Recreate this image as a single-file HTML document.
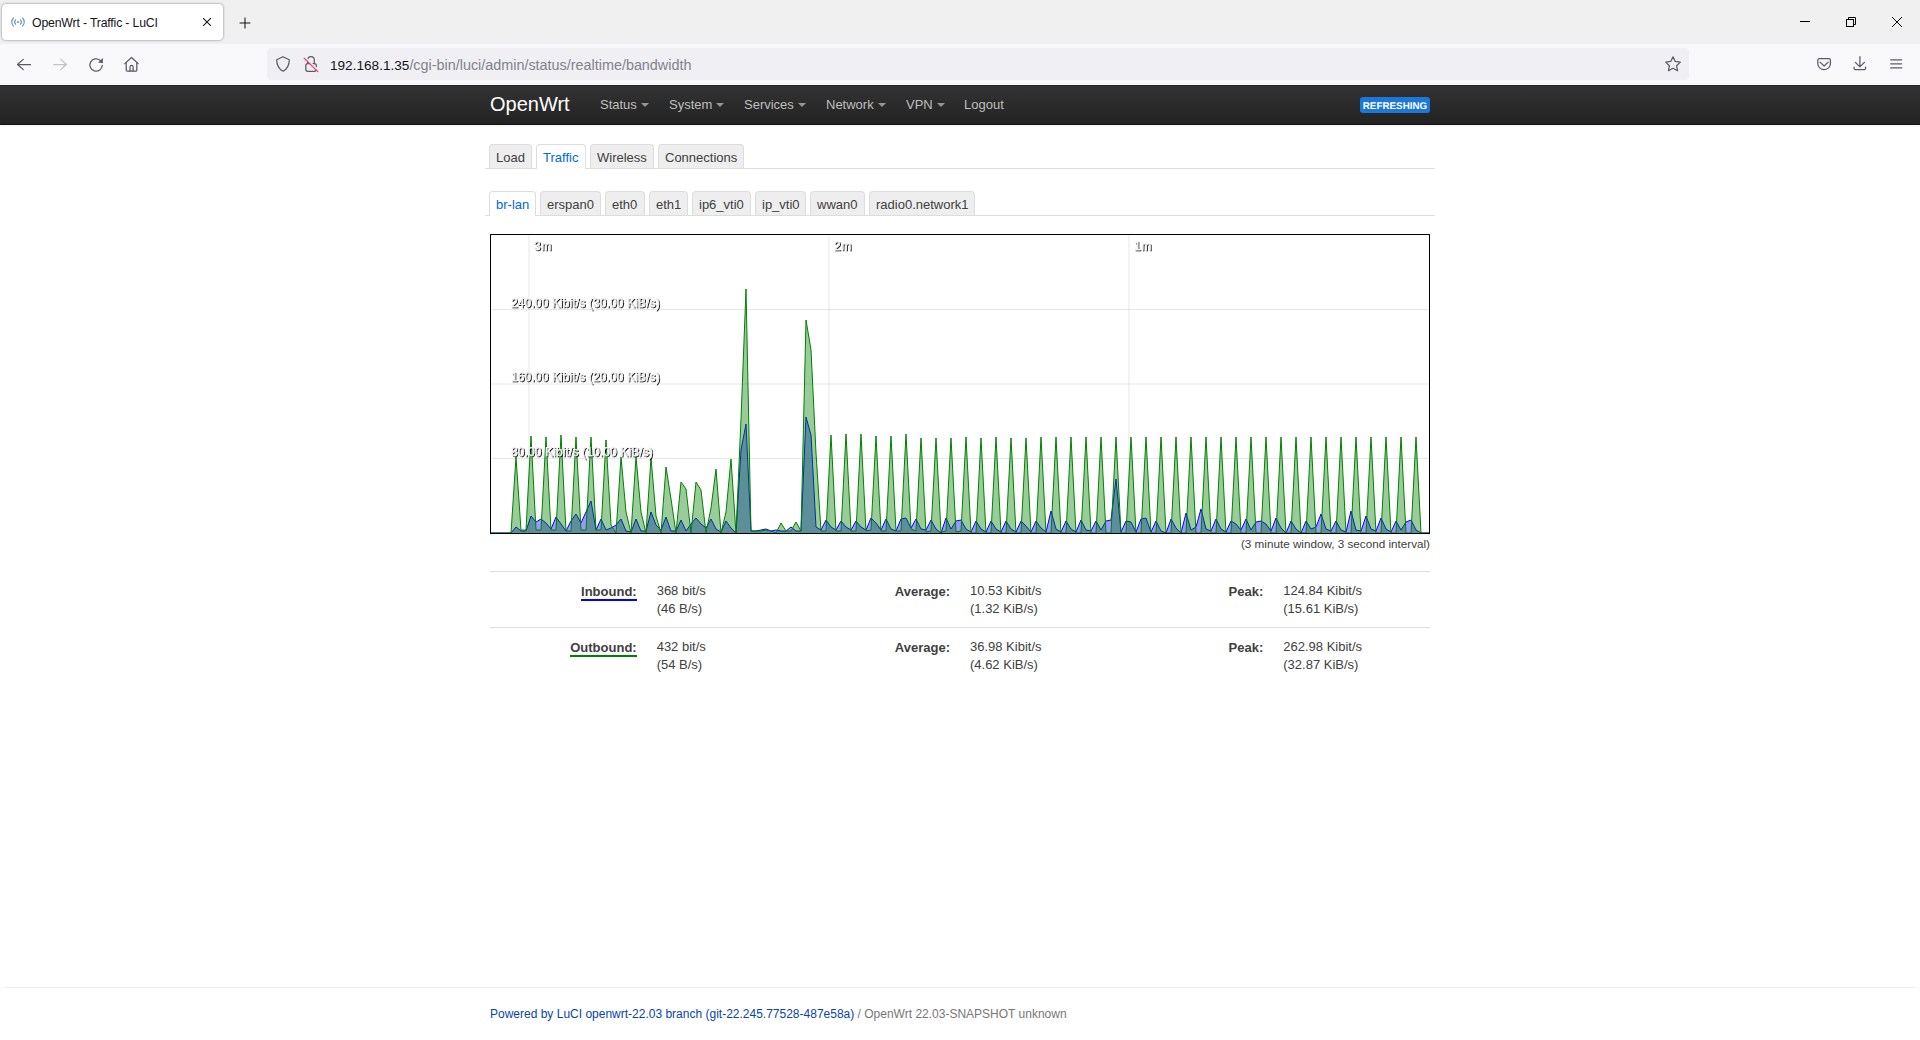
<!DOCTYPE html>
<html lang="en">
<head>
<meta charset="utf-8">
<title>OpenWrt - Traffic - LuCI</title>
<style>
*{box-sizing:border-box;margin:0;padding:0}
html,body{width:1920px;height:1040px;overflow:hidden;background:#fff}
body{font-family:"Liberation Sans",sans-serif;font-size:13px;line-height:18px;color:#404040;position:relative}
.abs{position:absolute}
/* ---------- browser chrome ---------- */
#tabbar{left:0;top:0;width:1920px;height:44px;background:#f0f0f0}
#tab{left:2px;top:4px;width:221px;height:36px;background:#fff;border-radius:4px;box-shadow:0 0 2.5px rgba(0,0,0,.5)}
#tabtitle{left:32px;top:14px;font-size:12.3px;line-height:18px;color:#15141a;white-space:nowrap;letter-spacing:-0.18px}
#navbar{left:0;top:44px;width:1920px;height:41px;background:#f9f9fb}
#urlbar{left:267px;top:48px;width:1422px;height:32px;background:#f0f0f4;border-radius:4px}
#url{left:330px;top:55px;font-size:13.6px;line-height:20px;color:#15141a;white-space:nowrap}
#url span{color:#82828c;font-size:14.38px}
svg.ic{position:absolute;overflow:visible}
/* ---------- page ---------- */
#hdr{left:0;top:85px;width:1920px;height:40px;background:linear-gradient(#333,#222);box-shadow:0 1px 2px rgba(0,0,0,.06),inset 0 1px 0 rgba(0,0,0,.22),inset 0 -1px 0 rgba(0,0,0,.45)}
#brand{left:490px;top:93px;font-size:20px;line-height:22px;color:#fff;white-space:nowrap}
.nav{top:95px;font-size:13px;line-height:19px;color:#bfbfbf;white-space:nowrap}
.nav i{display:inline-block;width:0;height:0;vertical-align:top;margin-top:8px;margin-left:4px;border-left:4px solid transparent;border-right:4px solid transparent;border-top:4px solid #fff;opacity:.5}
#badge{left:1360px;top:97px;width:70px;height:16px;background:#1c78d8;border-radius:3px;color:#fff;font-size:9.75px;font-weight:bold;line-height:17.5px;text-align:center;white-space:nowrap;letter-spacing:0.05px;padding-left:0}
#badge span{display:inline;text-rendering:geometricPrecision}
.tabline{left:485px;width:950px;height:1px;background:#ddd}
.tb{height:24px;border:1px solid #ddd;border-bottom:none;border-radius:4px 4px 0 0;background:#eee;color:#404040;font-size:13px;line-height:23px;padding:1px 6px 0;white-space:nowrap}
.tb.act{background:#fff;color:#0069d6;height:25px}
#chart{left:490px;top:234px;width:940px;height:300px;border:1px solid #000;background:#fff;overflow:hidden}
.lb{fill:#eee;stroke:#eee;stroke-width:0.25px;font-size:12px;font-family:"Liberation Sans",sans-serif;letter-spacing:0.12px}
#cap{left:1030px;top:535px;width:400px;text-align:right;font-size:11.7px;line-height:18px;color:#404040;white-space:nowrap}
.hr{left:490px;width:940px;height:1px;background:#ddd}
.c{font-size:13px;line-height:18px;color:#404040;white-space:nowrap}
.c b{font-weight:bold}
.r{text-align:right}
#tbl{left:490px;top:571px;width:940px;table-layout:fixed;border-collapse:separate;border-spacing:0}
#tbl td{width:16.6667%;padding:10px 10px 9px;border-top:1px solid #ddd;vertical-align:top;font-size:13px;line-height:18px;color:#404040;white-space:nowrap}
#tbl td.r{text-align:right}
#tbl td b{position:relative;top:1px}
#foot{left:490px;top:1005px;font-size:12px;line-height:18px;color:#777;white-space:nowrap}
#foot a{color:#0a44a8;text-decoration:none}
</style>
</head>
<body>
<!-- browser chrome -->
<div class="abs" id="tabbar"></div>
<div class="abs" id="tab"></div>
<svg class="ic" style="left:10px;top:14px" width="16" height="16" viewBox="0 0 16 16" fill="none" stroke="#6f9bb3" stroke-width="1.2" stroke-linecap="round"><circle cx="8" cy="8" r="1.1" fill="#6f9bb3" stroke="none"/><path d="M5.6 5.8a3.2 3.2 0 0 0 0 4.4M10.4 5.8a3.2 3.2 0 0 1 0 4.4M3.4 4a5.8 5.8 0 0 0 0 8M12.6 4a5.8 5.8 0 0 1 0 8"/></svg>
<div class="abs" id="tabtitle">OpenWrt - Traffic - LuCI</div>
<svg class="ic" style="left:202.200px;top:17.200px" width="10" height="10" viewBox="0 0 10 10" fill="none" stroke="#15141a" stroke-width="1.050"><path d="M1.100 1.100l7.800 7.800M8.900 1.100l-7.800 7.800"/></svg>
<svg class="ic" style="left:238.500px;top:17px" width="12" height="12" viewBox="0 0 12 12" fill="none" stroke="#15141a" stroke-width="1.050"><path d="M6 0.600v10.800M0.600 6h10.800"/></svg>
<!-- window controls -->
<svg class="ic" style="left:1800px;top:21px" width="10" height="1" viewBox="0 0 10 1"><rect width="10" height="1" fill="#000"/></svg>
<svg class="ic" style="left:1846px;top:17px" width="10" height="10" viewBox="0 0 10 10" fill="none" stroke="#000" stroke-width="1"><rect x="0.5" y="2.5" width="7" height="7"/><path d="M2.5 2.500v-2h7v7h-2"/></svg>
<svg class="ic" style="left:1892px;top:17px" width="10" height="10" viewBox="0 0 10 10" fill="none" stroke="#000" stroke-width="1"><path d="M0 0l10 10M10 0l-10 10"/></svg>
<!-- nav toolbar -->
<div class="abs" id="navbar"></div>
<svg class="ic" style="left:16px;top:56px" width="16" height="16" viewBox="0 0 16 16" fill="none" stroke="#5b5b66" stroke-width="1.250" stroke-linecap="round" stroke-linejoin="round"><path d="M14.500 8.500H1.600M7.300 3.400L1.500 8.500l5.800 5.100"/></svg>
<svg class="ic" style="left:52px;top:56px" width="16" height="16" viewBox="0 0 16 16" fill="none" stroke="#c1c1c8" stroke-width="1.250" stroke-linecap="round" stroke-linejoin="round"><path d="M1.700 8.500H14.400M8.700 3.400l5.800 5.100-5.800 5.100"/></svg>
<svg class="ic" style="left:88px;top:56px" width="16" height="16" viewBox="0 0 16 16" fill="none" stroke="#5b5b66" stroke-width="1.250" stroke-linecap="round" stroke-linejoin="round"><path d="M14.300 9.300A6.200 6.200 0 1 1 12.100 4.250"/><path d="M14.900 2.100V7.300L10.100 6.500Z" fill="#5b5b66" stroke="none"/></svg>
<svg class="ic" style="left:123px;top:56px" width="16" height="16" viewBox="0 0 16 16" fill="none" stroke="#5b5b66" stroke-width="1.250" stroke-linecap="round" stroke-linejoin="round"><path d="M1.800 7.600L8.500 1.500l6.700 6.100"/><path d="M3.200 6.500v7.700a1 1 0 0 0 1 1h8.600a1 1 0 0 0 1-1V6.500"/><path d="M7 15.200V11a1.550 1.550 0 0 1 3.100 0v4.200"/></svg>
<div class="abs" id="urlbar"></div>
<svg class="ic" style="left:275px;top:56px" width="16" height="16" viewBox="0 0 16 16" fill="none" stroke="#5b5b66" stroke-width="1.250" stroke-linejoin="round"><path d="M8 0.700L14.300 3.700C14.300 9.200 12 13 8 15.300C4 13 1.700 9.200 1.700 3.700Z"/></svg>
<svg class="ic" style="left:303px;top:56px" width="16" height="16" viewBox="0 0 16 16" fill="none" stroke="#5b5b66" stroke-width="1.25" stroke-linejoin="round" stroke-linecap="round"><rect x="2.800" y="7.600" width="10.500" height="7.700" rx="2"/><path d="M4.700 7.600V4a3.300 3.300 0 0 1 6.600 0v3.600"/><path d="M2.100 1.370L15.700 14.670" stroke="#f0f0f4" stroke-width="1.700" stroke-linecap="butt"/><path d="M1.200 2.300l13.600 13.300" stroke="#ff3b6b" stroke-width="1.250"/></svg>
<div class="abs" id="url">192.168.1.35<span>/cgi-bin/luci/admin/status/realtime/bandwidth</span></div>
<svg class="ic" style="left:1665px;top:56px" width="16" height="16" viewBox="0 0 16 16" fill="none" stroke="#5b5b66" stroke-width="1.250" stroke-linejoin="round"><path d="M8.00 0.80L10.23 5.48L15.30 6.14L11.60 9.68L12.52 14.75L8.00 12.24L3.48 14.75L4.40 9.68L0.70 6.14L5.77 5.48Z"/></svg>
<svg class="ic" style="left:1816px;top:56px" width="16" height="16" viewBox="0 0 16 16" fill="none" stroke="#5b5b66" stroke-width="1.250" stroke-linejoin="round" stroke-linecap="round"><path d="M3.100 2.700h10a1.300 1.300 0 0 1 1.300 1.300v3.400a6.300 6.300 0 0 1-12.600 0V4a1.300 1.300 0 0 1 1.300-1.300z"/><path d="M4 6.100l4.100 3.900 4.100-3.900"/></svg>
<svg class="ic" style="left:1852px;top:56px" width="16" height="16" viewBox="0 0 16 16" fill="none" stroke="#5b5b66" stroke-width="1.250" stroke-linejoin="round" stroke-linecap="round"><path d="M7.900 0.700v9.900M3.400 6.400l4.500 4.500 4.500-4.500"/><path d="M2.100 11.100v1.400a1.200 1.200 0 0 0 1.200 1.200h9a1.200 1.200 0 0 0 1.200-1.200v-1.400"/></svg>
<svg class="ic" style="left:1888px;top:56px" width="16" height="16" viewBox="0 0 16 16" fill="none" stroke="#5b5b66" stroke-width="1.250" stroke-linecap="round"><path d="M2.700 3.800h11M2.700 7.850h11M2.700 11.900h11"/></svg>

<!-- page header -->
<div class="abs" id="hdr"></div>
<div class="abs" id="brand">OpenWrt</div>
<div class="abs nav" style="left:600px">Status<i></i></div>
<div class="abs nav" style="left:669px">System<i></i></div>
<div class="abs nav" style="left:744px">Services<i></i></div>
<div class="abs nav" style="left:826px">Network<i></i></div>
<div class="abs nav" style="left:906px">VPN<i></i></div>
<div class="abs nav" style="left:964px">Logout</div>
<div class="abs" id="badge"><span>REFRESHING</span></div>

<!-- tabs -->
<div class="abs tabline" style="top:168px"></div>
<div class="abs tb" style="left:489px;top:144px">Load</div>
<div class="abs tb act" style="left:536px;top:144px;padding-right:7px">Traffic</div>
<div class="abs tb" style="left:590px;top:144px">Wireless</div>
<div class="abs tb" style="left:658px;top:144px">Connections</div>
<div class="abs tabline" style="top:215px"></div>
<div class="abs tb act" style="left:489px;top:191px">br-lan</div>
<div class="abs tb" style="left:540px;top:191px">erspan0</div>
<div class="abs tb" style="left:605px;top:191px;padding-right:7px">eth0</div>
<div class="abs tb" style="left:649px;top:191px">eth1</div>
<div class="abs tb" style="left:692px;top:191px">ip6_vti0</div>
<div class="abs tb" style="left:755px;top:191px;padding-right:5px">ip_vti0</div>
<div class="abs tb" style="left:810px;top:191px;padding-right:7px">wwan0</div>
<div class="abs tb" style="left:869px;top:191px;padding-right:5px">radio0.network1</div>
<div class="abs" id="chart"><svg width="938" height="298" style="position:absolute;left:0;top:0;overflow:visible">
<line x1="0" y1="74.5" x2="938" y2="74.5" style="stroke:black;stroke-width:0.1"/>
<line x1="0" y1="149" x2="938" y2="149" style="stroke:black;stroke-width:0.1"/>
<line x1="0" y1="223.5" x2="938" y2="223.5" style="stroke:black;stroke-width:0.1"/>
<line x1="38" y1="0" x2="38" y2="298" style="stroke:black;stroke-width:0.1"/>
<line x1="338" y1="0" x2="338" y2="298" style="stroke:black;stroke-width:0.1"/>
<line x1="638" y1="0" x2="638" y2="298" style="stroke:black;stroke-width:0.1"/>
<polyline points="0,298 0,298 5,298 10,298 15,298 20,298 25,292 30,296 35,296 40,281 45,287 50,284 55,288 60,294 65,282 70,289 75,296 80,286 85,279 90,288 95,277 100,266 105,295 110,284 115,295 120,293 125,290 130,284 135,296 140,297 145,284 150,296 155,296 160,277 165,290 170,295 175,282 180,296 185,296 190,285 195,296 200,289 205,283 210,289 215,293 220,284 225,294 230,297 235,286 240,293 245,298 250,215 255,189 260,296 265,296 270,295 275,294 280,296 285,295 290,296 295,296 300,292 305,296 310,296 315,182 320,200 325,292 330,295 335,285 340,292 345,295 350,286 355,292 360,295 365,286 370,292 375,295 380,283 385,288 390,295 395,284 400,294 405,296 410,284 415,283 420,293 425,284 430,294 435,295 440,285 445,294 450,298 455,283 460,294 465,286 470,285 475,294 480,297 485,286 490,294 495,297 500,286 505,294 510,297 515,286 520,294 525,297 530,286 535,291 540,297 545,286 550,293 555,297 560,276 565,294 570,297 575,286 580,294 585,297 590,285 595,295 600,296 605,286 610,295 615,286 620,285 625,244 630,297 635,286 640,287 645,297 650,284 655,283 660,297 665,286 670,296 675,298 680,284 685,293 690,298 695,278 700,295 705,292 710,274 715,294 720,296 725,284 730,294 735,297 740,286 745,289 750,295 755,284 760,295 765,287 770,286 775,289 780,296 785,283 790,293 795,298 800,286 805,294 810,298 815,286 820,294 825,292 830,279 835,294 840,296 845,286 850,295 855,297 860,276 865,295 870,296 875,281 880,294 885,296 890,283 895,294 900,297 905,286 910,295 915,287 920,285 925,295 930,298 935,298 938,298" style="fill:blue;fill-opacity:0.4;stroke:blue;stroke-width:1"/>
<polyline points="0,298 0,298 5,298 10,298 15,298 20,298 25,222 30,295 35,295 40,201 45,295 50,295 55,202 60,295 65,295 70,200 75,296 80,296 85,202 90,295 95,295 100,202 105,295 110,295 115,205 120,290 125,298 130,222 135,277 140,298 145,222 150,277 155,298 160,223 165,281 170,298 175,232 180,264 185,298 190,247 195,254 200,298 205,247 210,255 215,298 220,273 225,234 230,298 235,277 240,224 245,298 250,184 255,54 260,296 265,296 270,296 275,295 280,296 285,298 290,288 295,296 300,296 305,287 310,296 315,85 320,115 325,218 330,296 335,296 340,200 345,296 350,296 355,199 360,296 365,296 370,199 375,296 380,295 385,201 390,296 395,296 400,201 405,296 410,296 415,199 420,294 425,296 430,203 435,297 440,296 445,203 450,297 455,296 460,203 465,297 470,296 475,202 480,298 485,298 490,203 495,298 500,298 505,202 510,298 515,298 520,203 525,298 530,298 535,203 540,298 545,298 550,202 555,298 560,298 565,202 570,298 575,298 580,202 585,298 590,298 595,202 600,298 605,298 610,202 615,298 620,298 625,202 630,298 635,298 640,202 645,298 650,298 655,202 660,298 665,298 670,202 675,298 680,298 685,202 690,298 695,298 700,202 705,298 710,298 715,202 720,298 725,298 730,202 735,298 740,298 745,202 750,298 755,298 760,202 765,298 770,298 775,202 780,298 785,298 790,202 795,298 800,298 805,202 810,298 815,298 820,202 825,298 830,298 835,202 840,298 845,298 850,202 855,298 860,298 865,202 870,298 875,298 880,202 885,298 890,298 895,202 900,298 905,298 910,202 915,298 920,298 925,202 930,298 935,298 938,298" style="fill:green;fill-opacity:0.4;stroke:green;stroke-width:1"/>
<defs><filter id="sh" x="-5%" y="-30%" width="110%" height="180%"><feDropShadow dx="1" dy="1" stdDeviation="0.6" flood-color="#000" flood-opacity="0.9"/></filter></defs><g filter="url(#sh)">
<text x="20" y="71.52" class="lb">240.00 Kibit/s (30.00 KiB/s)</text>
<text x="20" y="146.02" class="lb">160.00 Kibit/s (20.00 KiB/s)</text>
<text x="20" y="220.52" class="lb">80.00 Kibit/s (10.00 KiB/s)</text>
<text x="43" y="15" class="lb" style="letter-spacing:0.6px">3m</text>
<text x="343" y="15" class="lb" style="letter-spacing:0.6px">2m</text>
<text x="643" y="15" class="lb" style="letter-spacing:0.6px">1m</text>
</g>
</svg>

</div>
<div class="abs" id="cap">(3 minute window, 3 second interval)</div>
<table class="abs" id="tbl" cellspacing="0" cellpadding="0">
<tr><td class="r"><b style="border-bottom:2px solid blue">Inbound:</b></td><td>368 bit/s<br>(46 B/s)</td><td class="r"><b>Average:</b></td><td>10.53 Kibit/s<br>(1.32 KiB/s)</td><td class="r"><b>Peak:</b></td><td>124.84 Kibit/s<br>(15.61 KiB/s)</td></tr>
<tr><td class="r"><b style="border-bottom:2px solid green">Outbound:</b></td><td>432 bit/s<br>(54 B/s)</td><td class="r"><b>Average:</b></td><td>36.98 Kibit/s<br>(4.62 KiB/s)</td><td class="r"><b>Peak:</b></td><td>262.98 Kibit/s<br>(32.87 KiB/s)</td></tr>
</table>
<div class="abs" style="left:5px;top:987px;width:1910px;height:1px;background:#eee"></div>
<div class="abs" id="foot"><a>Powered by LuCI openwrt-22.03 branch (git-22.245.77528-487e58a)</a> / OpenWrt 22.03-SNAPSHOT unknown</div>
</body>
</html>
